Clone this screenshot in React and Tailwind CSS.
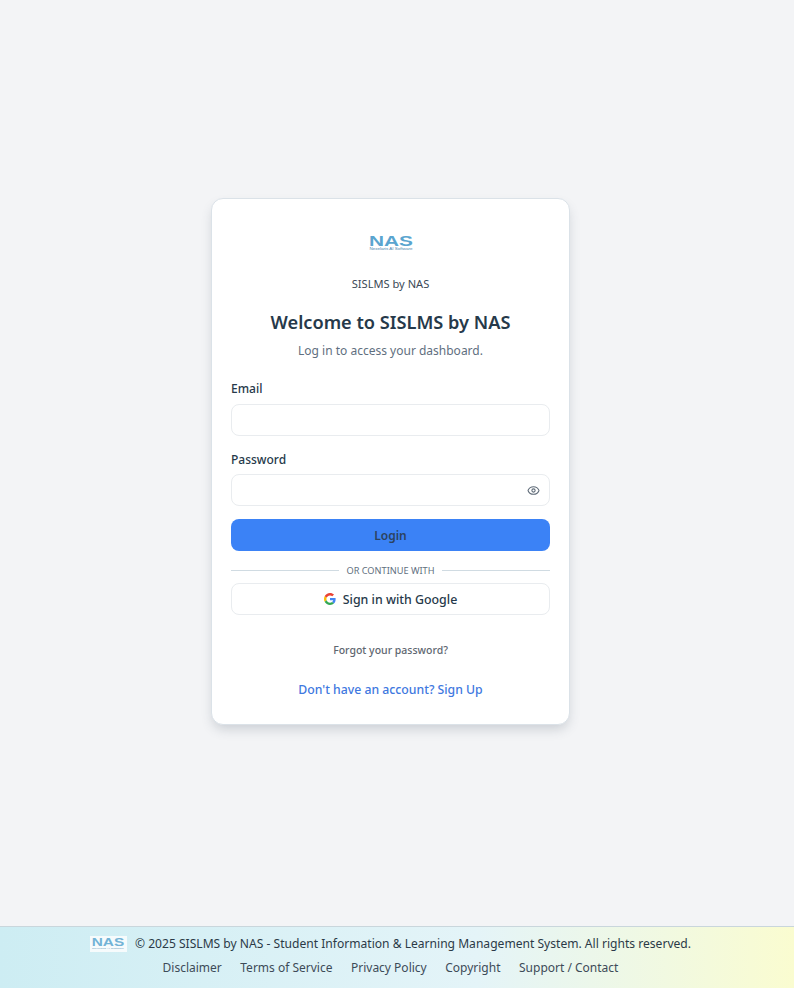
function NasLogo({ className }) {
  return (
    <svg viewBox="0 0 46 18" className={className} aria-label="NAS logo">
      <text x="23" y="12.300" textAnchor="middle" fontFamily="'Liberation Sans', sans-serif" fontWeight="700" fontSize="14.500" fill="#5aa5cf" textLength="44" lengthAdjust="spacingAndGlyphs">NAS</text>
      <text x="23" y="16.400" textAnchor="middle" fontFamily="'Liberation Sans', sans-serif" fontSize="3.400" fill="#4d86ad" textLength="43" lengthAdjust="spacingAndGlyphs">Nexelaris AI Software</text>
    </svg>
  );
}
function GoogleIcon() {
  return (
    <svg viewBox="0 0 48 48" className="w-[12px] h-[12px] mr-[7px] mb-[3px]">
      <path fill="#EA4335" d="M24 9.5c3.5 0 6.7 1.2 9.2 3.6l6.9-6.9C35.9 2.4 30.5 0 24 0 14.6 0 6.5 5.4 2.6 13.2l8 6.2C12.500 13.700 17.800 9.500 24 9.500z"/>
      <path fill="#4285F4" d="M46.500 24.500c0-1.600-.1-3.100-.4-4.500H24v9h12.700c-.6 3-2.200 5.500-4.700 7.200l7.700 6c4.500-4.200 6.800-10.300 6.800-17.700z"/>
      <path fill="#FBBC05" d="M10.500 28.600c-.5-1.400-.8-3-.8-4.600s.3-3.100.8-4.600l-8-6.200C.9 16.400 0 20.100 0 24s.9 7.600 2.600 10.800l7.900-6.200z"/>
      <path fill="#34A853" d="M24 48c6.500 0 11.900-2.100 15.900-5.800l-7.700-6c-2.200 1.500-4.900 2.300-8.200 2.300-6.200 0-11.500-4.200-13.400-9.800l-8 6.200C6.500 42.600 14.600 48 24 48z"/>
    </svg>
  );
}
function EyeIcon() {
  return (
    <svg viewBox="0 0 24 24" className="w-[13px] h-[13px]" fill="none" stroke="#5f6b78" strokeWidth="2" strokeLinecap="round" strokeLinejoin="round">
      <path d="M2.062 12.348a1 1 0 0 1 0-.696 10.750 10.750 0 0 1 19.876 0 1 1 0 0 1 0 .696 10.750 10.750 0 0 1-19.876 0"/>
      <circle cx="12" cy="12" r="3"/>
    </svg>
  );
}
export default function App() {
  return (
    <div className="min-h-screen flex flex-col bg-[#f3f4f6] text-[#26394a] font-['Noto_Sans','Open_Sans',sans-serif]">
      <main className="h-[926px] flex justify-center pt-[198px] pr-[13px]">
        <div className="w-[359px] h-[527px] bg-white border border-[#dbe2e8] rounded-xl shadow-[0_6px_12px_-2px_rgba(60,75,90,0.22)] px-[19px] pt-[35px] flex flex-col">
          <div className="flex justify-center">
            <NasLogo className="w-[46px] h-[18px]" />
          </div>
          <p className="mt-[24px] text-center text-[11.100px] leading-[16px] text-[#3b4956]">SISLMS by NAS</p>
          <h1 className="mt-[17px] text-center text-[18.200px] leading-[26px] font-semibold text-[#26394a]">Welcome to SISLMS by NAS</h1>
          <p className="mt-[7px] text-center text-[12px] leading-[18px] text-[#5f6f80]">Log in to access your dashboard.</p>
          <label className="mt-[20px] block text-[12px] leading-[18px] font-medium text-[#26394a]">Email</label>
          <input type="text" className="mt-[6px] h-[32px] w-full rounded-lg border border-[#e9ecef] bg-white outline-none" />
          <label className="mt-[15px] block text-[12px] leading-[18px] font-medium text-[#26394a]">Password</label>
          <div className="mt-[5px] h-[32px] w-full rounded-lg border border-[#e9ecef] bg-white flex items-center justify-end pr-[9px]">
            <EyeIcon />
          </div>
          <button className="mt-[13px] h-[32px] w-full rounded-lg bg-[#3b82f6] pt-px text-[12px] font-semibold text-[#2c4260]">Login</button>
          <div className="mt-[12px] flex items-center gap-[7px]">
            <div className="flex-1 h-px bg-[#d0dbe2] mb-[2px]" />
            <span className="text-[9.200px] leading-[16px] text-[#5f6f80]">OR CONTINUE WITH</span>
            <div className="flex-1 h-px bg-[#d0dbe2] mb-[2px]" />
          </div>
          <button className="mt-[4px] h-[32px] w-full rounded-lg border border-[#e9ecef] bg-white pt-[2px] flex items-center justify-center text-[12.400px] font-medium text-[#26394a]">
            <GoogleIcon />Sign in with Google
          </button>
          <p className="mt-[27px] text-center text-[10.500px] leading-[16px] font-medium text-[#5e6670]">Forgot your password?</p>
          <p className="mt-[23px] text-center text-[12.250px] leading-[18px] font-medium text-[#4078e0]">Don't have an account? Sign Up</p>
        </div>
      </main>
      <footer className="h-[62px] border-t border-[#c9d6dc] bg-gradient-to-r from-[#cdedf3] via-[#e4f4f8] via-60% to-[#fafcd0] flex flex-col items-center pt-[8px] pr-[13px] text-[12.080px] leading-[18px] text-[#2b3a47]">
        <div className="flex items-center">
          <div className="bg-white w-[37px] h-[16px] mr-[8px] flex items-center justify-center opacity-80">
            <NasLogo className="w-[34px] h-[14px]" />
          </div>
          <span>© 2025 SISLMS by NAS - Student Information &amp; Learning Management System. All rights reserved.</span>
        </div>
        <nav className="mt-[6px] flex gap-[18.500px] text-[12px] text-[#3d4b58]">
          <a>Disclaimer</a><a>Terms of Service</a><a>Privacy Policy</a><a>Copyright</a><a>Support / Contact</a>
        </nav>
      </footer>
    </div>
  );
}
